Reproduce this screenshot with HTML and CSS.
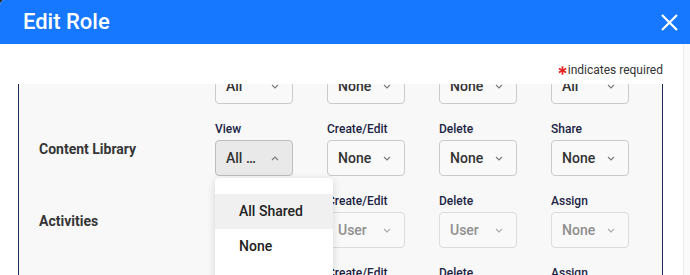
FILE: index.html
```html
<!DOCTYPE html>
<html lang="en">
<head>
  <meta charset="UTF-8">
  <title>Edit Role</title>
  <link rel="stylesheet" href="styles.css">
</head>
<body>

  <div class="modal">
    <header class="modal-header">
      <h2>Edit Role</h2>
      <button class="close" aria-label="Close">
        <svg width="17" height="17" viewBox="0 0 17 17"><path d="M1 1L16 16M16 1L1 16" stroke="#fff" stroke-width="2.2" fill="none"/></svg>
      </button>
    </header>

    <div class="modal-body">
      <div class="body-main">
        <p class="required">
          <svg class="star" width="9" height="9" viewBox="0 0 9 9" aria-hidden="true"><path d="M4.5 0.3V8.7M0.9 2.4L8.1 6.6M8.1 2.4L0.9 6.6"/></svg>indicates required
        </p>

        <div class="scroll-area">
          <div class="perm-panel">

            <!-- first row is scrolled above the visible area -->
            <div class="perm-row">
              <div class="row-name"></div>
              <div class="perm">
                <div class="perm-label"></div>
                <div class="select"><span>All</span><svg class="chev" width="8" height="5" viewBox="0 0 8 5"><path d="M1 1L4 4L7 1"/></svg></div>
              </div>
              <div class="perm">
                <div class="perm-label"></div>
                <div class="select"><span>None</span><svg class="chev" width="8" height="5" viewBox="0 0 8 5"><path d="M1 1L4 4L7 1"/></svg></div>
              </div>
              <div class="perm">
                <div class="perm-label"></div>
                <div class="select"><span>None</span><svg class="chev" width="8" height="5" viewBox="0 0 8 5"><path d="M1 1L4 4L7 1"/></svg></div>
              </div>
              <div class="perm">
                <div class="perm-label"></div>
                <div class="select"><span>All</span><svg class="chev" width="8" height="5" viewBox="0 0 8 5"><path d="M1 1L4 4L7 1"/></svg></div>
              </div>
            </div>

            <div class="perm-row">
              <div class="row-name">Content Library</div>
              <div class="perm">
                <div class="perm-label">View</div>
                <div class="select open"><span>All …</span><svg class="chev" width="8" height="5" viewBox="0 0 8 5"><path d="M1 4L4 1L7 4"/></svg></div>
                <ul class="menu">
                  <li class="active">All Shared</li>
                  <li>None</li>
                </ul>
              </div>
              <div class="perm">
                <div class="perm-label">Create/Edit</div>
                <div class="select"><span>None</span><svg class="chev" width="8" height="5" viewBox="0 0 8 5"><path d="M1 1L4 4L7 1"/></svg></div>
              </div>
              <div class="perm">
                <div class="perm-label">Delete</div>
                <div class="select"><span>None</span><svg class="chev" width="8" height="5" viewBox="0 0 8 5"><path d="M1 1L4 4L7 1"/></svg></div>
              </div>
              <div class="perm">
                <div class="perm-label">Share</div>
                <div class="select"><span>None</span><svg class="chev" width="8" height="5" viewBox="0 0 8 5"><path d="M1 1L4 4L7 1"/></svg></div>
              </div>
            </div>

            <div class="perm-row">
              <div class="row-name">Activities</div>
              <div class="perm">
                <div class="perm-label"></div>
                <div class="select disabled"></div>
              </div>
              <div class="perm">
                <div class="perm-label">Create/Edit</div>
                <div class="select disabled"><span>User</span><svg class="chev" width="8" height="5" viewBox="0 0 8 5"><path d="M1 1L4 4L7 1"/></svg></div>
              </div>
              <div class="perm">
                <div class="perm-label">Delete</div>
                <div class="select disabled"><span>User</span><svg class="chev" width="8" height="5" viewBox="0 0 8 5"><path d="M1 1L4 4L7 1"/></svg></div>
              </div>
              <div class="perm">
                <div class="perm-label">Assign</div>
                <div class="select disabled"><span>None</span><svg class="chev" width="8" height="5" viewBox="0 0 8 5"><path d="M1 1L4 4L7 1"/></svg></div>
              </div>
            </div>

            <div class="perm-row">
              <div class="row-name"></div>
              <div class="perm">
                <div class="perm-label"></div>
                <div class="select"></div>
              </div>
              <div class="perm">
                <div class="perm-label">Create/Edit</div>
                <div class="select"></div>
              </div>
              <div class="perm">
                <div class="perm-label">Delete</div>
                <div class="select"></div>
              </div>
              <div class="perm">
                <div class="perm-label">Assign</div>
                <div class="select"></div>
              </div>
            </div>

          </div>
        </div>
      </div>
      <div class="scrollbar"></div>
    </div>
  </div>

</body>
</html>
```

FILE: styles.css
```css
html {
  background: #2b2b2b;
}

body {
  margin: 0;
  height: 275px;
  overflow: hidden;
  font-family: 'Roboto', 'Liberation Sans', sans-serif;
  color: #333;
}

.modal {
  height: 275px;
  display: flex;
  flex-direction: column;
  background: #fff;
  border-top-left-radius: 5px;
  overflow: hidden;
}

.modal-header {
  flex: none;
  height: 44px;
  display: flex;
  align-items: center;
  justify-content: space-between;
  padding: 0 12px 0 23px;
  background: #1677ff;
}

.modal-header h2 {
  margin: 0;
  font-size: 22px;
  font-weight: 500;
  line-height: 44px;
  color: #fff;
}

.close {
  display: flex;
  padding: 0;
  margin-top: 1px;
  border: none;
  background: none;
  cursor: pointer;
}

.modal-body {
  flex: 1;
  min-height: 0;
  display: flex;
}

.body-main {
  flex: 1;
  min-width: 0;
  display: flex;
  flex-direction: column;
  padding: 0 20px 0 18px;
}

.scrollbar {
  flex: none;
  width: 6px;
  background: #fafafa;
  border-left: 1px solid #ececec;
}

.required {
  margin: 0;
  padding: 18px 0 6px;
  font-size: 12px;
  line-height: 16px;
  text-align: right;
  color: #333;
}

.required .star {
  margin-right: 1px;
  vertical-align: -1px;
}

.star path {
  fill: none;
  stroke: #e3231f;
  stroke-width: 1.7;
}

.scroll-area {
  flex: 1;
  min-height: 0;
  overflow: hidden;
}

/* scrolled down a little, so the first row sits under the top edge */
.perm-panel {
  margin-top: -56px;
  padding: 20px 0 20px 20px;
  background: #f8f8f8;
  border: 1px solid #1e2a5c;
  display: flex;
  flex-direction: column;
  gap: 17px;
}

.perm-row {
  display: grid;
  grid-template-columns: 142px repeat(4, 78px);
  column-gap: 34px;
  align-items: center;
}

.row-name {
  font-size: 14px;
  font-weight: 700;
  color: #363636;
}

.perm {
  position: relative;
}

.perm-label {
  height: 16px;
  font-size: 12px;
  font-weight: 500;
  line-height: 16px;
  margin-bottom: 3px;
  color: #1c2444;
}

.select {
  box-sizing: border-box;
  height: 36px;
  display: flex;
  align-items: center;
  justify-content: space-between;
  padding: 0 13px 0 10px;
  border: 1px solid #cbcbcb;
  border-radius: 4px;
  background: #f9f9f9;
  font-size: 14px;
  font-weight: 500;
  color: #333;
}

.chev path {
  fill: none;
  stroke: #7a7a7a;
  stroke-width: 1.1;
}

.select.open {
  background: #e9e9e9;
  border-color: #bdbdbd;
}

.select.disabled {
  color: #8f8f8f;
  border-color: #dcdcdc;
}

.select.disabled .chev path {
  stroke: #aaa;
}

.menu {
  position: absolute;
  top: 57px;
  left: 0;
  width: 118px;
  margin: 0;
  padding: 16px 0;
  list-style: none;
  background: #fff;
  border-radius: 4px;
  box-shadow: 0 2px 8px rgba(0, 0, 0, 0.15);
  z-index: 2;
}

.menu li {
  height: 35px;
  line-height: 35px;
  padding-left: 24px;
  font-size: 14px;
  font-weight: 500;
  color: #222;
}

.menu li.active {
  background: #f0f0f0;
}
```
